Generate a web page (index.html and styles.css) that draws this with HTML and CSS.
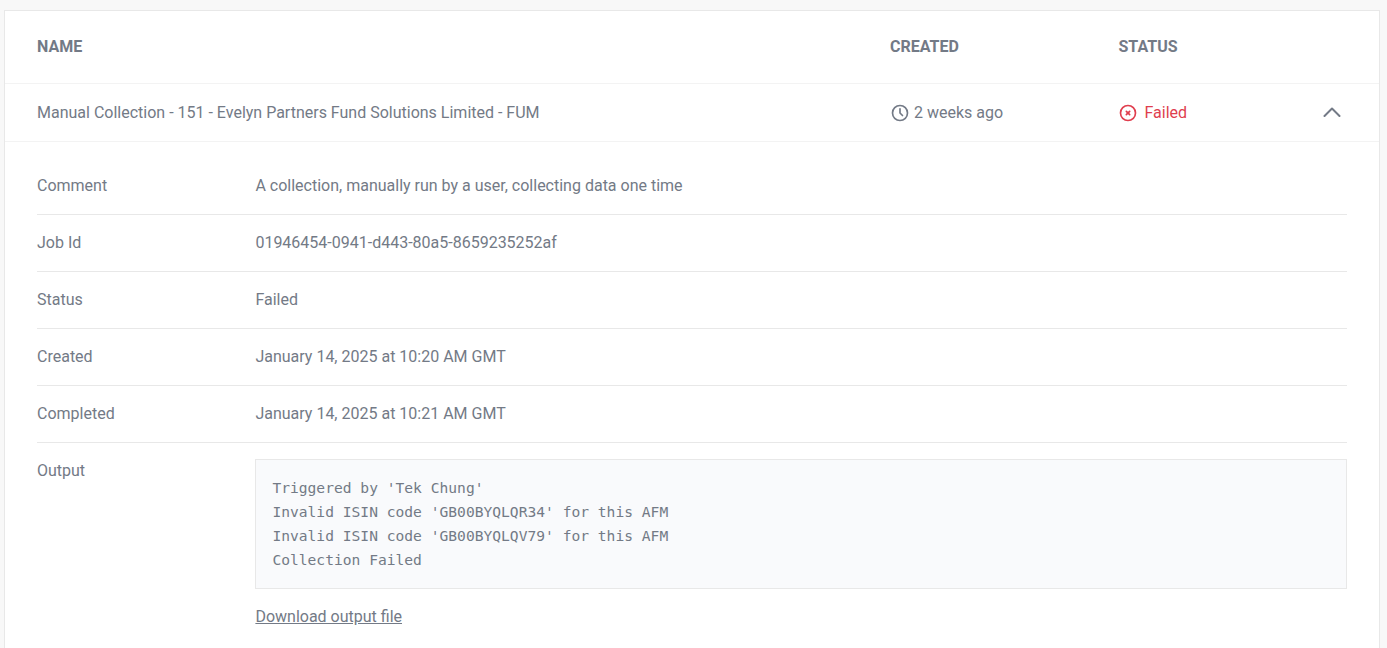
FILE: index.html
```html
<!DOCTYPE html>
<html lang="en">
<head>
<meta charset="utf-8">
<title>Jobs</title>
<link rel="stylesheet" href="styles.css">
</head>
<body>
<main class="card">
  <div class="grid head">
    <div>NAME</div>
    <div>CREATED</div>
    <div>STATUS</div>
    <div></div>
  </div>
  <div class="grid job">
    <div>Manual Collection - 151 - Evelyn Partners Fund Solutions Limited - FUM</div>
    <div class="meta">
      <svg class="icon" viewBox="0 0 24 24" fill="none" stroke="currentColor" stroke-width="2" stroke-linecap="round" stroke-linejoin="round"><circle cx="12" cy="12" r="9"/><path d="M12 7v5l3 3"/></svg>
      <span>2 weeks ago</span>
    </div>
    <div class="meta failed">
      <svg class="icon" viewBox="0 0 24 24" fill="none" stroke="currentColor" stroke-width="2" stroke-linecap="round" stroke-linejoin="round"><circle cx="12" cy="12" r="9"/><path d="M10 10l4 4M14 10l-4 4"/></svg>
      <span>Failed</span>
    </div>
    <div class="toggle">
      <svg class="chevron" viewBox="0 0 18 10" fill="none" stroke="currentColor" stroke-width="2" stroke-linecap="round" stroke-linejoin="round"><path d="M1.5 9L9 1.5 16.5 9"/></svg>
    </div>
  </div>
  <div class="details">
    <div class="row"><div class="label">Comment</div><div>A collection, manually run by a user, collecting data one time</div></div>
    <div class="row"><div class="label">Job Id</div><div>01946454-0941-d443-80a5-8659235252af</div></div>
    <div class="row"><div class="label">Status</div><div>Failed</div></div>
    <div class="row"><div class="label">Created</div><div>January 14, 2025 at 10:20 AM GMT</div></div>
    <div class="row"><div class="label">Completed</div><div>January 14, 2025 at 10:21 AM GMT</div></div>
    <div class="row last">
      <div class="label">Output</div>
      <div class="output">
        <pre class="log">Triggered by 'Tek Chung'
Invalid ISIN code 'GB00BYQLQR34' for this AFM
Invalid ISIN code 'GB00BYQLQV79' for this AFM
Collection Failed</pre>
        <a class="download" href="#">Download output file</a>
      </div>
    </div>
  </div>
</main>
</body>
</html>
```

FILE: styles.css
```css
html, body {
  margin: 0;
  height: 648px;
  overflow: hidden;
  background: #f8f8f8;
}
body {
  padding: 10px 7px 0 4px;
  font-family: Roboto, sans-serif;
  font-size: 16px;
  line-height: 24px;
  color: #737a86;
}
.card {
  background: #fff;
  border: 1px solid #e8e8e8;
  border-bottom: 0;
  height: 660px;
}
.grid {
  display: grid;
  grid-template-columns: 853px 228.5px 1fr 48px;
  padding: 0 32px;
  align-items: center;
}
.head {
  height: 72px;
  border-bottom: 1px solid #f3f3f3;
  font-weight: 700;
  font-size: 16px;
}
.job {
  height: 57px;
  border-bottom: 1px solid #f3f3f3;
}
.meta {
  display: flex;
  align-items: center;
  gap: 4px;
}
.icon {
  width: 20px;
  height: 20px;
  flex: none;
}
.failed {
  color: #e03e4e;
  gap: 7px;
}
.failed .icon {
  margin-left: -1px;
}
.toggle {
  display: flex;
  justify-content: flex-end;
  padding: 0 6px 2px 0;
}
.chevron {
  width: 18px;
  height: 10px;
}
.details {
  padding: 16px 32px 0;
}
.row {
  display: grid;
  grid-template-columns: 218.4px 1fr;
  padding: 16px 0;
  border-bottom: 1px solid #e8e8e8;
}
.last {
  border-bottom: 0;
}
.log {
  margin: 0;
  padding: 16px;
  background: #f9fafc;
  border: 1px solid #e8e8e8;
  font-family: "DejaVu Sans Mono", monospace;
  font-size: 14.62px;
  line-height: 24px;
  color: #737a86;
}
.download {
  display: inline-block;
  margin-top: 16px;
  color: #737a86;
  text-decoration: underline;
}
```
